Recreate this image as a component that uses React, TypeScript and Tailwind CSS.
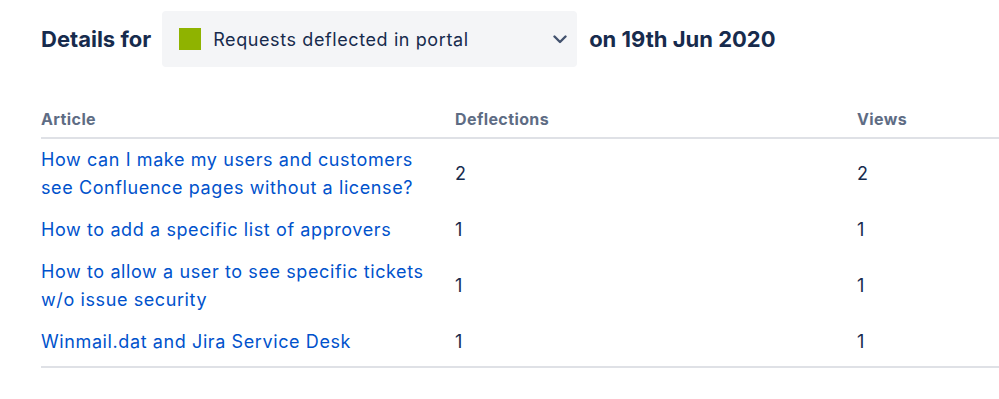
import React from "react";

const rows = [
  { lines: ["How can I make my users and customers", "see Confluence pages without a license?"], d: 2, v: 2 },
  { lines: ["How to add a specific list of approvers"], d: 1, v: 1 },
  { lines: ["How to allow a user to see specific tickets", "w/o issue security"], d: 1, v: 1 },
  { lines: ["Winmail.dat and Jira Service Desk"], d: 1, v: 1 },
];

export default function App() {
  return (
    <div
      className="w-[999px] h-[399px] overflow-hidden bg-white pl-[41px] pt-[11px]"
      style={{ fontFamily: "Inter, 'Noto Sans', sans-serif" }}
    >
      <div className="flex items-center h-[56px]">
        <span className="text-[22px] font-bold text-[#172b4d]">Details for</span>
        <div className="ml-[11px] w-[415px] h-[56px] bg-[#f4f5f7] rounded-[4px] flex items-center pl-[17px] pr-[10px]">
          <span className="w-[22px] h-[22px] bg-[#8fb300] shrink-0" />
          <span className="ml-[12px] text-[18px] tracking-[0.6px] text-[#172b4d] flex-1">Requests deflected in portal</span>
          <svg width="14" height="9" viewBox="0 0 14 9">
            <path d="M1.5 1.5L7 7l5.5-5.5" fill="none" stroke="#42526e" strokeWidth="2.4" strokeLinecap="round" strokeLinejoin="round" />
          </svg>
        </div>
        <span className="ml-[12px] text-[22px] font-bold text-[#172b4d]">on 19th Jun 2020</span>
      </div>

      <div className="mt-[40px] w-[1000px]">
        <div className="grid grid-cols-[414px_402px_1fr] border-b-2 border-[#dfe1e6] pb-[6px] text-[16px] tracking-[0.4px] font-bold text-[#5e6c84] leading-[24px]">
          <div>Article</div>
          <div>Deflections</div>
          <div>Views</div>
        </div>
        <div className="border-b-2 border-[#dfe1e6] pb-[3px]">
          {rows.map((r, i) => (
            <div key={i} className="grid grid-cols-[414px_402px_1fr] items-center py-[7px] text-[18px] tracking-[0.6px] leading-[28px]">
              <div className="text-[#0052cc]">
                {r.lines.map((l, j) => (
                  <div key={j} className="whitespace-nowrap">{l}</div>
                ))}
              </div>
              <div className="text-[#172b4d]">{r.d}</div>
              <div className="text-[#172b4d]">{r.v}</div>
            </div>
          ))}
        </div>
      </div>
    </div>
  );
}
